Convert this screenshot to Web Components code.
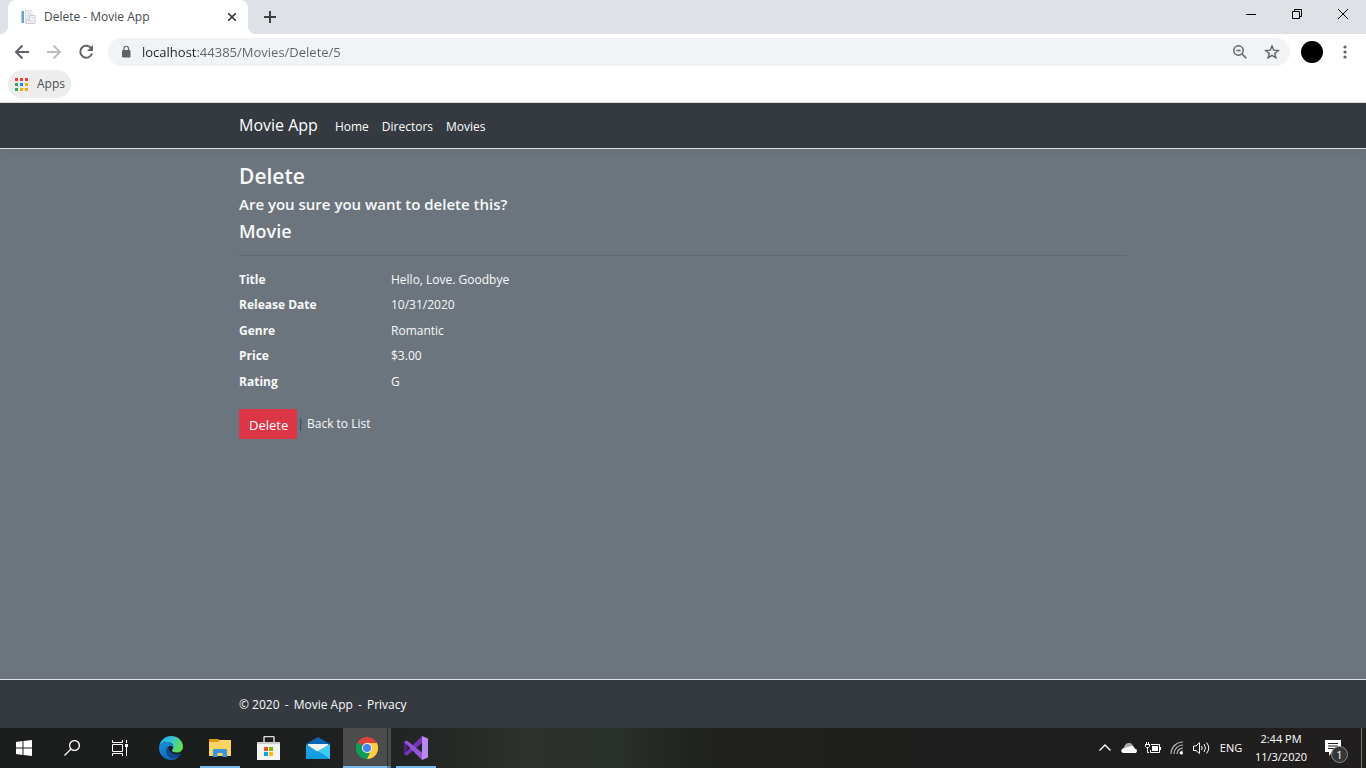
<!DOCTYPE html>
<html lang="en">
<head>
<meta charset="utf-8">
<title>Delete - Movie App</title>
<style>
  html, body { margin: 0; }
  body { font-family: "Open Sans", "Noto Sans", sans-serif; font-size: 12px; line-height: 20px; }
</style>
</head>
<body>
<desktop-screen>
  <browser-window>
    <browser-tab slot="tabs">Delete - Movie App</browser-tab>
    <browser-toolbar slot="toolbar" url="localhost:44385/Movies/Delete/5"></browser-toolbar>
    <bookmarks-bar slot="bookmarks">Apps</bookmarks-bar>
    <movie-layout>
      <site-nav slot="nav"></site-nav>
      <delete-view></delete-view>
      <site-footer slot="footer"></site-footer>
    </movie-layout>
  </browser-window>
  <task-bar slot="taskbar"></task-bar>
</desktop-screen>

<script>
const define = (name, html, setup) => {
  const template = document.createElement('template');
  template.innerHTML = html;
  customElements.define(name, class extends HTMLElement {
    constructor() {
      super();
      this.attachShadow({ mode: 'open' }).append(template.content.cloneNode(true));
    }
    connectedCallback() { if (setup) setup(this, this.shadowRoot); }
  });
};

define('desktop-screen', `
<style>
  :host { display: flex; flex-direction: column; min-height: 100vh; background: #fff; }
  .work { flex: 1; display: flex; flex-direction: column; }
</style>
<div class="work"><slot></slot></div>
<slot name="taskbar"></slot>`);

define('browser-window', `
<style>
  :host { flex: 1; display: flex; flex-direction: column; background: #fff; }
  .strip { display: flex; height: 34px; padding-left: 8px; background: #dee1e6; }
  button { display: grid; place-items: center; border: 0; padding: 0; background: none; }
  .new { width: 44px; }
  .controls { display: flex; margin-left: auto; height: 28px; }
  .controls button { width: 46px; }
  svg { display: block; fill: none; }
</style>
<header class="strip">
  <slot name="tabs"></slot>
  <button class="new" aria-label="New tab"><svg width="14" height="14" viewBox="0 0 14 14" stroke="#3c4043" stroke-width="2"><path d="M7 1v12M1 7h12"/></svg></button>
  <div class="controls">
    <button aria-label="Minimize"><svg width="10" height="10" stroke="#000"><path d="M0 5.5h10"/></svg></button>
    <button aria-label="Restore"><svg width="10" height="10" stroke="#000"><path d="M.5 2.5h7v7h-7zM2.500 2.500V.5h7v7h-2"/></svg></button>
    <button aria-label="Close"><svg width="10" height="10" stroke="#000"><path d="M0 0l10 10M10 0L0 10"/></svg></button>
  </div>
</header>
<slot name="toolbar"></slot>
<slot name="bookmarks"></slot>
<slot></slot>`);

define('browser-tab', `
<style>
  :host { position: relative; display: flex; align-items: center; width: 240px; box-sizing: border-box; padding: 0 8px 0 12px; gap: 8px;
    background: #fff; border-radius: 8px 8px 0 0; color: #45484c; font-size: 12px; }
  :host::before, :host::after { content: ""; position: absolute; bottom: 0; width: 8px; height: 8px; }
  :host::before { left: -8px; background: radial-gradient(circle at 0 0, transparent 8px, #fff 8px); }
  :host::after { right: -8px; background: radial-gradient(circle at 100% 0, transparent 8px, #fff 8px); }
  .title { flex: 1; white-space: nowrap; }
  button { display: grid; place-items: center; width: 16px; height: 16px; padding: 0; border: 0; background: none; }
</style>
<svg width="16" height="16" viewBox="0 0 16 16">
  <path d="M1 2h3v12H1z" fill="#5ea5cc"/><path d="M1 2h1v12H1z" fill="#a9d0e6"/>
  <path d="M5 1h7l2 3v10H5z" fill="#f1f3f6"/><path d="M5.500 1v13M5 1.500h7" stroke="#d5d9e0" fill="none"/>
  <path d="M7 4h4M7 6h3M7 8h2" stroke="#d0d5dd"/><path d="M9.500 6.500h5.500v8H6.500v-4h3z" fill="#f6f7f9" stroke="#c6ccd6"/><path d="M8 12h5M11 9h3" stroke="#c6ccd6"/>
</svg>
<span class="title"><slot></slot></span>
<button aria-label="Close tab"><svg width="8" height="8" viewBox="0 0 8 8" stroke="#3c4043" stroke-width="1.6"><path d="M0 0l8 8M8 0L0 8"/></svg></button>`);

define('browser-toolbar', `
<style>
  :host { display: flex; align-items: center; height: 36px; padding: 0 10px 0 6px; color: #5f6368; }
  button { display: grid; place-items: center; width: 32px; height: 28px; padding: 0; border: 0; background: none; color: inherit; }
  .dim { color: #babcbe; }
  .omni { flex: 1; display: flex; align-items: center; height: 28px; margin-left: 6px; padding: 0 2px 0 12px; border-radius: 14px; background: #f1f3f4; }
  input { flex: 1; min-width: 0; margin-left: 10px; padding: 0; border: 0; outline: 0; height: 28px; font: 13px/28px "Open Sans", sans-serif; color: #5f6368;
    background: linear-gradient(90deg, #202124 54px, #5f6368 54px); -webkit-background-clip: text; background-clip: text; -webkit-text-fill-color: transparent; }
  .avatar { width: 22px; height: 22px; margin: 0 11px; border-radius: 50%; background: #000; }
  .menu { width: 22px; }
  svg { display: block; }
</style>
<button aria-label="Back"><svg width="16" height="16" viewBox="0 0 16 16" fill="none" stroke="currentColor" stroke-width="2"><path d="M15 8H2M8.500 1.500L2 8l6.500 6.500"/></svg></button>
<button class="dim" aria-label="Forward"><svg width="16" height="16" viewBox="0 0 16 16" fill="none" stroke="currentColor" stroke-width="2"><path d="M1 8h13M7.500 1.500L14 8l-6.500 6.500"/></svg></button>
<button aria-label="Reload"><svg width="16" height="16" viewBox="0 0 16 16" fill="none" stroke="currentColor" stroke-width="2"><path d="M13.400 4.600A6 6 0 1 0 14 9.500"/><path d="M15 1v6H9z" fill="currentColor" stroke="none"/></svg></button>
<div class="omni">
  <svg width="12" height="14" viewBox="0 0 12 14"><path d="M3 5h6.500a1 1 0 0 1 1 1v5.500a1 1 0 0 1-1 1H3a1 1 0 0 1-1-1V6a1 1 0 0 1 1-1z" fill="#5f6368"/><path d="M4 5V3.500a2.250 2.250 0 0 1 4.500 0V5" fill="none" stroke="#5f6368" stroke-width="1.200"/></svg>
  <input type="text" aria-label="Address and search bar" spellcheck="false">
  <button aria-label="Zoom"><svg width="14" height="14" viewBox="0 0 14 14" fill="none" stroke="currentColor" stroke-width="1.500"><circle cx="5.500" cy="5.500" r="4.700"/><path d="M9 9l4.300 4.300M3.500 5.500h4"/></svg></button>
  <button aria-label="Bookmark this tab"><svg width="16" height="16" viewBox="0 0 16 16" fill="none" stroke="currentColor" stroke-width="1.400"><path d="M8 2l1.700 4.200 4.500.3-3.500 2.900 1.200 4.400L8 11.400l-3.900 2.400 1.200-4.400L1.800 6.500l4.500-.3z"/></svg></button>
</div>
<button class="avatar" aria-label="Profile"></button>
<button class="menu" aria-label="Menu"><svg width="4" height="14" viewBox="0 0 4 14" fill="currentColor"><circle cx="2" cy="2" r="1.600"/><circle cx="2" cy="7" r="1.600"/><circle cx="2" cy="12" r="1.600"/></svg></button>`,
(host, root) => { root.querySelector('input').value = host.getAttribute('url'); });

define('bookmarks-bar', `
<style>
  :host { display: flex; align-items: flex-start; height: 32px; padding-left: 8px; border-bottom: 1px solid #dcdde0; }
  button { display: flex; align-items: center; gap: 9px; height: 28px; padding: 0 6px; border: 0; border-radius: 14px; background: #ededee; color: #4a4d51; font: 12px/20px "Open Sans", sans-serif; }
</style>
<button><svg width="14" height="14" viewBox="0 0 14 14">
<path d="M1 1h3v3H1zM6 1h3v3H6zM11 1h3v3h-3z" fill="#ea4335"/><path d="M1 6h3v3H1zM1 11h3v3H1z" fill="#34a853"/><path d="M6 6h3v3H6z" fill="#1a88ff"/><path d="M11 6h3v3h-3zM6 11h3v3H6zM11 11h3v3h-3z" fill="#fbac05"/></svg><span><slot></slot></span></button>`);

define('movie-layout', `
<style>
  :host { flex: 1; display: flex; flex-direction: column; background: #6c757d; color: #f8f9fa; }
  main { flex: 1; }
</style>
<slot name="nav"></slot>
<main><slot></slot></main>
<slot name="footer"></slot>`);

define('page-container', `
<style>:host { display: block; box-sizing: border-box; width: 100%; max-width: 912px; margin: 0 auto; padding: 0 12px; }</style>
<slot></slot>`);

define('site-nav', `
<style>
  :host { display: block; background: #343a40; border-bottom: 1px solid #dee2e6; box-shadow: 0 3px 10px rgba(0,0,0,.05); }
  nav { display: flex; align-items: baseline; height: 45px; line-height: 44px; }
  a { color: #fff; text-decoration: none; }
  .brand { font-size: 16px; margin-right: 17px; }
  .links { display: flex; gap: 13px; }
</style>
<page-container><nav>
  <a class="brand" href="#">Movie App</a>
  <div class="links"><a href="#">Home</a><a href="#">Directors</a><a href="#">Movies</a></div>
</nav></page-container>`);

define('delete-view', `
<style>
  :host { display: block; padding-top: 13px; }
  h1, h2, h3 { margin: 0; font-weight: 600; }
  h1 { font-size: 21px; line-height: 28px; }
  h2 { font-size: 15px; line-height: 28px; }
  h3 { font-size: 18px; line-height: 26px; }
  hr { margin: 11px 0 14px; border: 0; border-top: 1px solid #616970; }
  dl { display: grid; grid-template-columns: 152px 1fr; grid-template-rows: repeat(5, 1fr); height: 127px; margin: 0; }
  dt { font-weight: 700; }
  dd { margin: 0; }
  form { display: flex; margin-top: 12px; }
  button { height: 30px; padding: 2px 9px 0 10px; border: 0; border-radius: 3px; background: #dc3545; color: #fff; font: 13px/20px "Open Sans", sans-serif; }
  .bar { color: #2f4a5f; font-weight: 600; }
  p { margin: 0; line-height: 30px; }
  a { color: #f8f9fa; text-decoration: none; }
</style>
<page-container>
  <h1>Delete</h1>
  <h2>Are you sure you want to delete this?</h2>
  <h3>Movie</h3>
  <hr>
  <dl>
    <dt>Title</dt><dd>Hello, Love. Goodbye</dd>
    <dt>Release Date</dt><dd>10/31/2020</dd>
    <dt>Genre</dt><dd>Romantic</dd>
    <dt>Price</dt><dd>$3.00</dd>
    <dt>Rating</dt><dd>G</dd>
  </dl>
  <form onsubmit="return false"><button type="submit">Delete</button><p><span class="bar">|</span> <a href="#">Back to List</a></p></form>
</page-container>`);

define('site-footer', `
<style>
  :host { display: block; background: #343a40; border-top: 1px solid #dee2e6; }
  footer { padding-top: 2px; line-height: 46px; }
  .sep { margin: 0 2px; }
  a { color: #fff; text-decoration: none; }
</style>
<page-container><footer>© 2020 <span class="sep">-</span> Movie App <span class="sep">-</span> <a href="#">Privacy</a></footer></page-container>`);

define('task-button', `
<style>
  :host { display: block; width: 48px; height: 40px; position: relative; }
  button { display: grid; place-items: center; width: 100%; height: 100%; padding: 0; border: 0; background: none; }
  :host([running])::after { content: ""; position: absolute; left: 4px; right: 4px; bottom: 0; height: 2px; background: #76b9ed; }
  :host([active]) { background: linear-gradient(90deg, #4c4c4c 44px, #2e2f2f 44px, #2e2f2f 45px, #484a49 45px); }
  :host([active])::after { left: 0; right: 0; background: linear-gradient(90deg, #76b9ed 44px, #5386ac 44px); }
</style>
<button><slot></slot></button>`,
(host, root) => root.querySelector('button').setAttribute('aria-label', host.getAttribute('label')));

define('task-bar', `
<style>
  :host { display: flex; height: 40px; color: #fff;
    background: linear-gradient(90deg, #1b1e1d 0, #1b1e1d 20%, #222624 31%, #2c312c 38%, #2a302c 45%, #20221e 51%, #1e1f1d 65%, #1e1e1e 80%, #211f1e 100%); }
  svg { display: block; }
  .system, .apps { display: flex; }
  .apps { gap: 1px; margin-left: 3px; }
  .tray { display: flex; align-items: center; margin-left: auto; }
  button { display: grid; place-items: center; height: 40px; padding: 0; border: 0; background: none; color: #fff; font: 12px/18px "Open Sans", sans-serif; }
  .icon { width: 24px; }
  .lang { width: 36px; font-size: 11px; }
  .clock { width: 64px; font-size: 11px; }
  .notes { position: relative; width: 48px; padding-right: 8px; }
  .badge { position: absolute; left: 18px; top: 18px; width: 15px; height: 15px; border: 1px solid #8b8b8b; border-radius: 50%; background: #363636; font-size: 11px; line-height: 15px; }
  .peek { width: 5px; border-left: 1px solid #777; }
</style>
<div class="system">
  <task-button label="Start"><svg width="16" height="16" fill="#fff"><path d="M0 2l6.500-.9V7.500H0zM7.500 1L16 0v7.500H7.500zM0 8.500h6.500V15L0 14zM7.500 8.500H16V16l-8.500-1z"/></svg></task-button>
  <task-button label="Search"><svg width="16" height="16" fill="none" stroke="#fff" stroke-width="1.300"><circle cx="10.500" cy="5.500" r="4.900"/><path d="M7 9L.5 15.500"/></svg></task-button>
  <task-button label="Task View"><svg width="16" height="16" fill="none" stroke="#fff"><path d="M.5 0v2.500h10V0M.5 4.500h10v7H.500zM.5 16v-2.500h10V16M14.500 0v3M14.500 7v9"/><path d="M13 4h3v3h-3z" fill="#fff" stroke="none"/></svg></task-button>
</div>
<div class="apps">
  <task-button label="Edge"><svg width="24" height="24" viewBox="0 0 24 24">
    <defs><linearGradient id="a" x1="0" y1="0" x2="1" y2=".35"><stop stop-color="#1ba5dc"/><stop offset=".55" stop-color="#35c6d3"/><stop offset="1" stop-color="#62df58"/></linearGradient><linearGradient id="b" x1="0" y1="0" x2=".5" y2="1"><stop stop-color="#1595df"/><stop offset="1" stop-color="#1164b8"/></linearGradient></defs>
    <path d="M.3 10.500C1 4.300 6 0 12 0c7 0 12 5 12 10.500 0 4-3 6-6 6-3.300 0-5-1-5-2.300 0-.8 1.300-1.200 1.300-3C14.300 8.500 12 6 8.500 6 4.500 6 1.500 8 .3 10.500z" fill="url(#a)"/>
    <path d="M0 12.500C0 9 3.800 6.100 8 6.100c4 0 6.200 2.500 6.300 5.200-.8-1-1.700-1.400-2.800-1.400-2.500 0-4 2.400-4 5 0 4 3 7 7 7 2 0 4-.6 5.500-1.500-1.800 2.200-4.800 3.600-8 3.600C5.400 24 0 18.500 0 12.500z" fill="url(#b)"/>
    <path d="M9.300 10.600c-1.400 1-2.200 3-1.800 5.200.6 3.700 3.700 6.100 7 6.100 3 0 5.500-1 7.300-3.400.5-.7 0-1.200-.7-.8-1 .5-2 .8-3.300.8-4.400 0-8.400-3.100-8.500-7.900z" fill="#0c4a91"/></svg></task-button>
  <task-button running label="File Explorer"><svg width="22" height="20" viewBox="0 0 22 20"><path d="M0 2h22v16H0z" fill="#fcd462"/><path d="M0 1h9.500l1 1.500-1.500 1.500H0z" fill="#dd9a10"/><path d="M4 19V12l1-1h12l1 1v7h-4.500v-4h-5v4z" fill="#3a96dd"/></svg></task-button>
  <task-button label="Microsoft Store"><svg width="24" height="24" viewBox="0 0 24 24"><path d="M7 7V1.500a1 1 0 0 1 1-1h8a1 1 0 0 1 1 1V7" fill="none" stroke="#ddd" stroke-width="1.400"/><path d="M0 6h23v18H0z" fill="#f4f4f4"/><path d="M0 6h23v2H0z" fill="#cfcfcf"/><path d="M7 11h4v4H7z" fill="#f25022"/><path d="M12 11h4v4h-4z" fill="#7fba00"/><path d="M7 16h4v4H7z" fill="#00a4ef"/><path d="M12 16h4v4h-4z" fill="#ffb900"/></svg></task-button>
  <task-button label="Mail"><svg width="24" height="24" viewBox="0 0 24 24"><path d="M0 8l12-7 12 7v7H0z" fill="#0a64b4"/><path d="M2 8h20v6l-10 3-10-3z" fill="#f2f2f2"/><path d="M0 8l12 8 12-8v15H0z" fill="#1c9fe2"/><path d="M24 8v15L12 15z" fill="#3fc9f5"/><path d="M0 23l12-8 12 8z" fill="#149be0"/></svg></task-button>
  <task-button running active label="Chrome"><svg width="22" height="22" viewBox="0 0 24 24"><path d="M12 12L1.610 6A12 12 0 0 1 22.390 6L22.400 6.500H12z" fill="#db4437"/><path d="M12 12L22.390 6A12 12 0 0 1 12 24L11.500 23.500z" fill="#ffcd40"/><path d="M12 12L12 24A12 12 0 0 1 1.610 6z" fill="#0f9d58"/><path d="M12 6.500h10.600A12 12 0 0 1 12 24l4.800-9.200z" fill="#ffcd40"/><path d="M1.610 6l5.300 8.700L12 17.500h3.200L12 24A12 12 0 0 1 1.610 6z" fill="#0f9d58"/><circle cx="12" cy="12" r="5.500" fill="#f1f1f1"/><circle cx="12" cy="12" r="4.400" fill="#4285f4"/></svg></task-button>
  <task-button running label="Visual Studio"><svg width="24" height="24" viewBox="0 0 24 24"><path d="M0 6l3-1.500v15L0 18z" fill="#52218a"/><path d="M3 19.500L0 18 18 0v7z" fill="#7436b5"/><path d="M3 4.500l15 12V24L0 6z" fill="#9355d7"/><path d="M3 9v6l3-3z" fill="#242725"/><path d="M18 0l6 2.500v19L18 24z" fill="#b888f3"/></svg></task-button>
</div>
<div class="tray">
  <button class="icon" aria-label="Show hidden icons"><svg width="12" height="8" fill="none" stroke="#fff" stroke-width="1.400"><path d="M.500 6.500L6 1l5.500 5.500"/></svg></button>
  <button class="icon" aria-label="OneDrive"><svg width="16" height="12"><path d="M3 7C3 2 6 1 8 1c3 0 4 2 4 4l-6 3z" fill="#aaa"/><path d="M2.500 11C-.5 11-.5 6.500 3 6l4-1 4-1c2 0 2.500 1.500 2.500 2.500 3 0 3.500 4.500 0 4.500z" fill="#fff"/></svg></button>
  <button class="icon" aria-label="Battery"><svg width="16" height="12" fill="none" stroke="#fff"><path d="M6 2.500h8.500v8h-9V8M15.500 5v3M1.500 0v2.500M3.500 0v2.500M0 2.500h5M.5 2.500v2l1 1h2l1-1v-2M2.500 5.500v5H4"/><path d="M7 4h6v5H7z" fill="#fff" stroke="none"/></svg></button>
  <button class="icon" aria-label="Network"><svg width="14" height="14" fill="none" stroke="#bbb" stroke-width="1.200"><path d="M1 13A12 12 0 0 1 13 1M4 13a9 9 0 0 1 9-9M7 13a6 6 0 0 1 6-6M10 13a3 3 0 0 1 3-3"/><circle cx="11.500" cy="12" r="1.500" fill="#fff" stroke="none"/></svg></button>
  <button class="icon" aria-label="Volume"><svg width="17" height="14" fill="none" stroke="#fff"><path d="M.5 5v4.500H3l3.500 3V1.500L3 5zM8.500 5q1.500 2 0 4M11 3q3 4 0 8M13.500 1.500q4.500 5.500 0 11"/></svg></button>
  <button class="lang">ENG</button>
  <button class="clock"><span>2:44 PM<br>11/3/2020</span></button>
  <button class="notes" aria-label="Notifications"><svg width="16" height="16"><path d="M0 0h16v12H7l-3 4v-4H0z" fill="#fff"/><path d="M3 3.500h10M3 6h10M3 8.500h7" stroke="#222"/></svg><span class="badge">1</span></button>
  <button class="peek" aria-label="Show desktop"></button>
</div>`);
</script>
</body>
</html>
